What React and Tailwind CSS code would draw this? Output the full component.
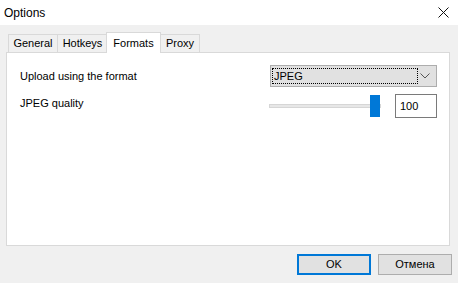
import React from "react"

const font = { fontFamily: "'Segoe UI', 'Liberation Sans', Arial, sans-serif" }

function Tab({ label, selected, className = "" }) {
  if (selected) {
    return (
      <div className={`relative z-20 h-[21px] bg-white border border-b-0 border-[#d9d9d9] flex items-start justify-center pt-[2px] ${className}`}>
        {label}
      </div>
    )
  }
  return (
    <div className={`relative z-10 mt-[2px] h-[18px] bg-[#f0f0f0] border border-b-0 border-[#d9d9d9] flex items-center justify-center ${className}`}>
      {label}
    </div>
  )
}

function Chevron() {
  return (
    <svg width="10" height="6" viewBox="0 0 10 6" fill="none">
      <path d="M0.5 0.5 L5 5 L9.5 0.5" stroke="#555" strokeWidth="1" />
    </svg>
  )
}

export default function App() {
  return (
    <div className="w-[458px] h-[283px] flex flex-col bg-[#f0f0f0] text-[11px] text-black overflow-hidden" style={font}>
      {/* title bar */}
      <div className="h-[25px] bg-white flex items-center justify-between pl-[4px] pr-[9px]">
        <span className="text-[12px]">Options</span>
        <svg width="11" height="11" viewBox="0 0 11 11">
          <path d="M0.5 0.5 L10.5 10.5 M10.5 0.5 L0.5 10.5" stroke="#111" strokeWidth="1" />
        </svg>
      </div>

      <div className="flex-1 flex flex-col pl-[6px] pr-[8px] pt-[7px]">
        {/* tabs */}
        <div className="flex items-start ml-[2px] -mb-px relative">
          <Tab label="General" className="w-[50px]" />
          <Tab label="Hotkeys" className="w-[51px] -ml-px" />
          <Tab label="Formats" selected className="w-[55px] -ml-[2px]" />
          <Tab label="Proxy" className="w-[40px] -ml-px" />
        </div>

        {/* panel */}
        <div className="h-[194px] bg-white border border-[#d9d9d9] pl-[13px] pr-[12px] pt-[12px]">
          <div className="flex items-center h-[22px]">
            <span className="flex-1">Upload using the format</span>
            <div className="w-[167px] h-[22px] bg-[#e1e1e1] border border-[#adadad] flex items-center pl-[1px] pr-[6px]">
              <div className="w-[146px] h-[16px] border border-dotted border-black flex items-center pl-[1px] leading-none">
                JPEG
              </div>
              <div className="flex-1 flex justify-end">
                <Chevron />
              </div>
            </div>
          </div>

          <div className="flex items-start h-[24px] mt-[7px]">
            <span className="flex-1 mt-[1px]">JPEG quality</span>
            <div className="relative w-[112px] h-[24px] flex items-center">
              <div className="w-full h-[4px] bg-[#e7e7e7] border border-[#d6d6d6]" />
              <div className="absolute left-[101px] top-[1px] w-[10px] h-[22px] bg-[#0078d7]" />
            </div>
            <div className="ml-[14px] w-[42px] h-[24px] border border-[#7a7a7a] flex items-center pl-[4px]">
              100
            </div>
          </div>
        </div>

        {/* buttons */}
        <div className="flex justify-end gap-[7px] mt-[8px] mr-[-2px]">
          <button className="w-[74px] h-[21px] bg-[#e1e1e1] border-2 border-[#0078d7] flex items-center justify-center">
            OK
          </button>
          <button className="w-[74px] h-[21px] bg-[#e1e1e1] border border-[#adadad] flex items-center justify-center">
            Отмена
          </button>
        </div>
      </div>
    </div>
  )
}
